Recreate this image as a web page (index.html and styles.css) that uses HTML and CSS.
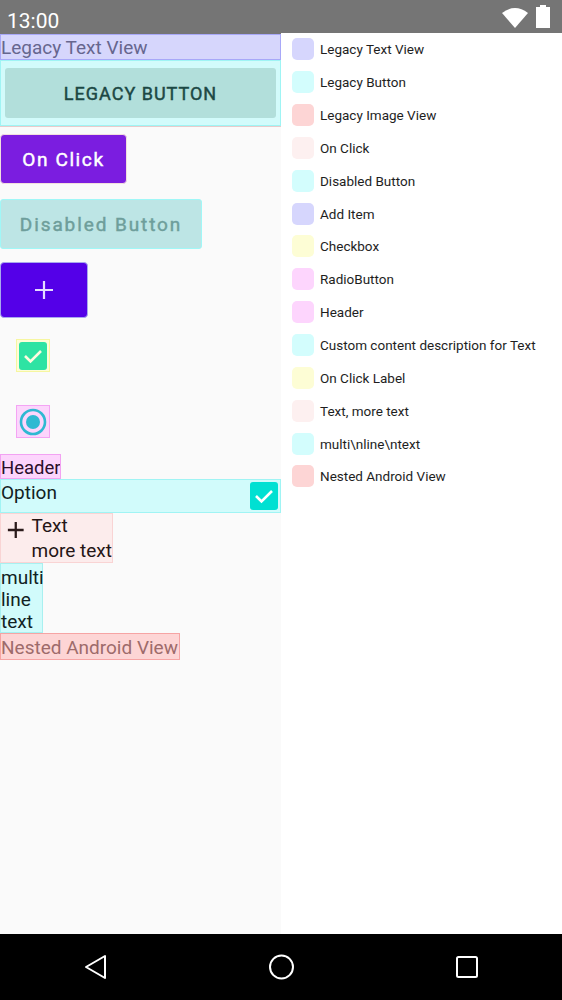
FILE: index.html
```html
<!DOCTYPE html>
<html>
<head>
<meta charset="utf-8">
<link rel="stylesheet" href="styles.css">
</head>
<body>
<div class="phone">
  <div class="status">
    <span class="time">13:00</span>
    <div class="status-icons">
      <svg class="wifi" width="28" height="22" viewBox="0 0 28 22"><path d="M1 6 Q14 -4 27 6 L14 21 Z" fill="#fff"/></svg>
      <svg class="battery" width="16" height="23" viewBox="0 0 16 23"><rect x="5" y="0" width="6" height="3" fill="#fff"/><rect x="1" y="2" width="14" height="21" fill="#fff"/></svg>
    </div>
  </div>
  <div class="main">
    <div class="left">
      <div class="legacy-text">Legacy Text View</div>
      <div class="legacy-btn-wrap"><div class="legacy-btn">LEGACY BUTTON</div></div>
      <div class="legacy-image"></div>
      <div class="onclick">On Click</div>
      <div class="disabled">Disabled Button</div>
      <div class="add"><svg width="20" height="20" viewBox="0 0 20 20"><path d="M10 1 V19 M1 10 H19" stroke="#e4dcff" stroke-width="2.2"/></svg></div>
      <div class="check-hl"><div class="checkbox green"><svg width="20" height="16" viewBox="0 0 20 16"><path d="M2 8 L7.5 13.5 L18 3" stroke="#fffbe0" stroke-width="2.6" fill="none"/></svg></div></div>
      <div class="radio-hl"><svg width="30" height="30" viewBox="0 0 30 30"><circle cx="15" cy="15" r="12" stroke="#2fb9d2" stroke-width="2.6" fill="none"/><circle cx="15" cy="15" r="7" fill="#2fb9d2"/></svg></div>
      <div class="header">Header</div>
      <div class="option"><span>Option</span><div class="checkbox teal"><svg width="20" height="16" viewBox="0 0 20 16"><path d="M2 8 L7.5 13.5 L18 3" stroke="#ffffff" stroke-width="2.6" fill="none"/></svg></div></div>
      <div class="textblock">
        <svg class="plus" width="20" height="20" viewBox="0 0 20 20"><path d="M10 1 V19 M1 10 H19" stroke="#2a1a1a" stroke-width="2.6"/></svg>
        <div class="tb-lines"><div>Text</div><div>more text</div></div>
      </div>
      <div class="multi">multi<br>line<br>text</div>
      <div class="nested">Nested Android View</div>
    </div>
    <div class="right">
      <div class="item"><span class="sw c-blue"></span>Legacy Text View</div>
      <div class="item"><span class="sw c-cyan"></span>Legacy Button</div>
      <div class="item"><span class="sw c-red"></span>Legacy Image View</div>
      <div class="item"><span class="sw c-pale"></span>On Click</div>
      <div class="item"><span class="sw c-cyan"></span>Disabled Button</div>
      <div class="item"><span class="sw c-blue"></span>Add Item</div>
      <div class="item"><span class="sw c-yellow"></span>Checkbox</div>
      <div class="item"><span class="sw c-pink"></span>RadioButton</div>
      <div class="item"><span class="sw c-pink"></span>Header</div>
      <div class="item"><span class="sw c-cyan"></span>Custom content description for Text</div>
      <div class="item"><span class="sw c-yellow"></span>On Click Label</div>
      <div class="item"><span class="sw c-pale"></span>Text, more text</div>
      <div class="item"><span class="sw c-cyan"></span>multi\nline\ntext</div>
      <div class="item"><span class="sw c-red"></span>Nested Android View</div>
    </div>
  </div>
  <div class="nav">
    <svg width="562" height="66" viewBox="0 0 562 66">
      <path d="M86 33 L105 22 L105 44 Z" stroke="#fff" stroke-width="2" fill="none" stroke-linejoin="round"/>
      <circle cx="281.5" cy="33" r="11.5" stroke="#fff" stroke-width="2" fill="none"/>
      <rect x="457" y="23" width="20" height="20" rx="1.5" stroke="#fff" stroke-width="2" fill="none"/>
    </svg>
  </div>
</div>
</body>
</html>
```

FILE: styles.css
```css
* { box-sizing: border-box; }
html, body { margin: 0; padding: 0; }
body { width: 562px; height: 1000px; font-family: Roboto, "Noto Sans", sans-serif; background: #fafafa; }
.phone { width: 562px; height: 1000px; display: flex; flex-direction: column; }
.status { height: 34px; background: #757575; display: flex; justify-content: space-between; align-items: flex-start; }
.time { color: #fff; font-size: 21px; padding-left: 7px; padding-top: 9px; line-height: 24px; }
.status-icons { display: flex; align-items: flex-start; gap: 6px; padding-top: 5px; padding-right: 11px; }
.wifi { margin-top: 2px; }
.main { height: 900px; display: flex; }
.left { width: 281px; background: #fafafa; display: flex; flex-direction: column; align-items: flex-start; }
.right { flex: 1; background: #fff; margin-top: -1px; }
.nav { height: 66px; background: #000; }
.nav svg { display: block; }

.medium { font-weight: 400; }
.legacy-text { width: 281px; height: 26px; background: #d6d6fc; border: 1px solid #a8a8f8; color: #66668e; font-size: 19px; line-height: 24px; padding-top: 1px; white-space: nowrap; }
.legacy-btn-wrap { width: 281px; height: 66px; background: #d2fbfb; border: 1px solid #9ff4f4; padding: 7px 4px 0 4px; }
.legacy-btn { height: 50px; background: #b2dfdb; border-radius: 3px; display: flex; align-items: center; justify-content: center; color: #1c4844; font-size: 18px; font-weight: 400; -webkit-text-stroke: 0.45px #1c4844; letter-spacing: 1px; }
.legacy-image { width: 281px; height: 1px; background: #e6cccc; }

.onclick { margin-top: 7px; width: 127px; height: 50px; background: #7b1de0; border: 1px solid #f2dede; border-radius: 4px; color: #fff; font-size: 19px; font-weight: 400; -webkit-text-stroke: 0.45px #fff; letter-spacing: 1.6px; display: flex; align-items: center; justify-content: center; }
.disabled { margin-top: 15px; width: 202px; height: 50px; background: #bde5e5; border: 1px solid #a0f7f7; border-radius: 3px; color: #6e9e9b; font-size: 19px; font-weight: 400; -webkit-text-stroke: 0.45px #6e9e9b; letter-spacing: 1.9px; display: flex; align-items: center; justify-content: center; }
.add { margin-top: 13px; width: 88px; height: 56px; background: #5400e8; border: 1px solid #a8a8ee; border-radius: 4px; display: flex; align-items: center; justify-content: center; }
.add svg { display: block; }

.check-hl { margin-top: 21px; margin-left: 16px; width: 34px; height: 33px; background: #fdfdd8; border: 1px solid #f6f6a0; padding: 2px; }
.checkbox { width: 28px; height: 28px; border-radius: 3px; display: flex; align-items: center; justify-content: center; }
.checkbox svg { display: block; }
.green { background: #2ee3a3; }
.teal { background: #00e0d2; }
.radio-hl { margin-top: 33px; margin-left: 16px; width: 34px; height: 33px; background: #fcd5fc; border: 1px solid #f4a4f4; display: flex; align-items: center; justify-content: center; }
.radio-hl svg { display: block; }

.header { margin-top: 16px; height: 25px; width: 61px; background: #fcd5fc; border: 1px solid #f2a2f2; color: #2a0f2a; font-size: 18.5px; line-height: 24px; padding-top: 1px; white-space: nowrap; overflow: hidden; }
.option { width: 281px; height: 34px; background: #d1fbfb; border: 1px solid #a0f4f4; display: flex; align-items: center; justify-content: space-between; padding-right: 2px; color: #102222; font-size: 19px; }
.option span { line-height: 24px; margin-top: -6px; }
.textblock { width: 113px; height: 50px; background: #fcecec; border: 1px solid #f9d4d4; display: flex; align-items: flex-start; color: #241515; font-size: 19px; }
.plus { display: block; margin: 6px 0 0 6px; }
.tb-lines { margin-left: 7px; line-height: 24px; margin-top: 0px; white-space: nowrap; }
.tb-lines div:last-child { margin-top: 1px; }
.multi { width: 43px; height: 70px; background: #d1fbfb; border: 1px solid #a8f0f0; color: #102222; font-size: 19px; line-height: 22px; padding-top: 3px; }
.nested { height: 27px; width: 180px; background: #fdd5d5; border: 1px solid #f6a4a4; color: #9e6b6b; font-size: 19px; line-height: 25px; padding-top: 1px; white-space: nowrap; overflow: hidden; }

.item { height: 32.85px; display: flex; align-items: center; padding-left: 11px; font-size: 13.5px; color: #1e1e1e; white-space: nowrap; }
.sw { width: 22px; height: 22px; border-radius: 5px; margin-right: 6px; flex: none; }
.c-blue { background: #d6d6fd; }
.c-cyan { background: #d3fdfd; }
.c-red { background: #fdd5d5; }
.c-pale { background: #fdf0f0; }
.c-yellow { background: #fdfdd5; }
.c-pink { background: #fdd5fd; }
```
